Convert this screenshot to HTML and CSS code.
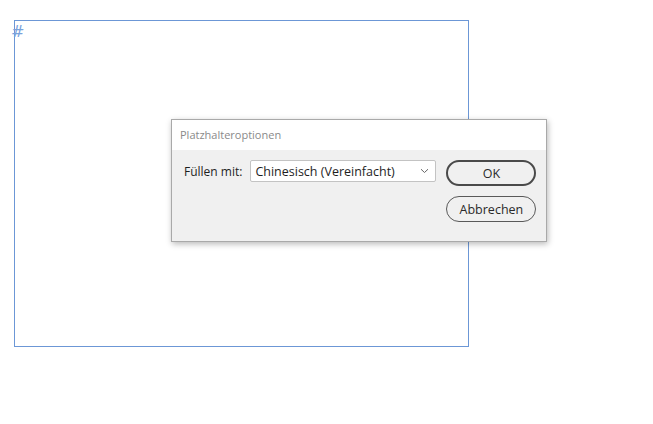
FILE: index.html
```html
<!DOCTYPE html>
<html lang="de">
<head>
<meta charset="utf-8">
<link rel="stylesheet" href="styles.css">
</head>
<body>
<div class="stage">
  <div class="frame"><span class="hash">#</span></div>
  <div class="dialog">
    <div class="titlebar">Platzhalteroptionen</div>
    <div class="content">
      <div class="row">
        <label class="label">Füllen mit:</label>
        <div class="select">
          <span>Chinesisch (Vereinfacht)</span>
          <svg class="chev" width="9" height="6" viewBox="0 0 9 6"><path d="M1 1.2 L4.5 4.5 L8 1.2" fill="none" stroke="#666" stroke-width="1"/></svg>
        </div>
      </div>
      <div class="buttons">
        <button class="btn primary">OK</button>
        <button class="btn">Abbrechen</button>
      </div>
    </div>
  </div>
</div>
</body>
</html>
```

FILE: styles.css
```css
html, body {
  margin: 0;
  padding: 0;
  background: #ffffff;
}
body {
  font-family: "Open Sans", "Noto Sans", sans-serif;
}
.stage {
  position: relative;
  width: 653px;
  height: 424px;
  padding: 20px 0 0 14px;
  box-sizing: border-box;
}
.frame {
  width: 453px;
  height: 325px;
  border: 1px solid #6c97d6;
  position: relative;
}
.hash {
  position: absolute;
  left: -4px;
  top: 3px;
  font-size: 16px;
  line-height: 16px;
  color: #7aa2dc;
  font-family: "DejaVu Sans", sans-serif;
  font-style: italic;
}
.dialog {
  position: absolute;
  left: 171px;
  top: 119px;
  width: 374px;
  height: 121px;
  border: 1px solid #a9a9a9;
  background: #f0f0f0;
  box-shadow: 1px 2px 6px rgba(0,0,0,0.28);
  display: flex;
  flex-direction: column;
}
.titlebar {
  height: 30px;
  background: #ffffff;
  color: #8a8a8a;
  font-size: 11px;
  line-height: 30px;
  padding-left: 8px;
}
.content {
  display: flex;
  padding: 10px 0 0 12px;
  gap: 10px;
}
.row {
  display: flex;
  align-items: center;
  height: 22px;
  gap: 8px;
}
.label {
  font-size: 12px;
  color: #1e1e1e;
}
.select {
  height: 20px;
  border: 1px solid #c3c3c3;
  border-radius: 2px;
  background: #ffffff;
  display: flex;
  align-items: center;
  justify-content: space-between;
  padding: 0 6px 0 4px;
  box-sizing: content-box;
  font-size: 12.5px;
  color: #1e1e1e;
  width: 174px;
}
.chev {
  display: block;
}
.buttons {
  display: flex;
  flex-direction: column;
  gap: 10px;
}
.btn {
  width: 90px;
  height: 26px;
  border: 1px solid #595959;
  border-radius: 13px;
  background: #f0f0f0;
  font-family: "Open Sans", "Noto Sans", sans-serif;
  font-size: 12.5px;
  color: #2a2a2a;
  padding: 0;
}
.btn.primary {
  border: 2px solid #4a4a4a;
}
```
